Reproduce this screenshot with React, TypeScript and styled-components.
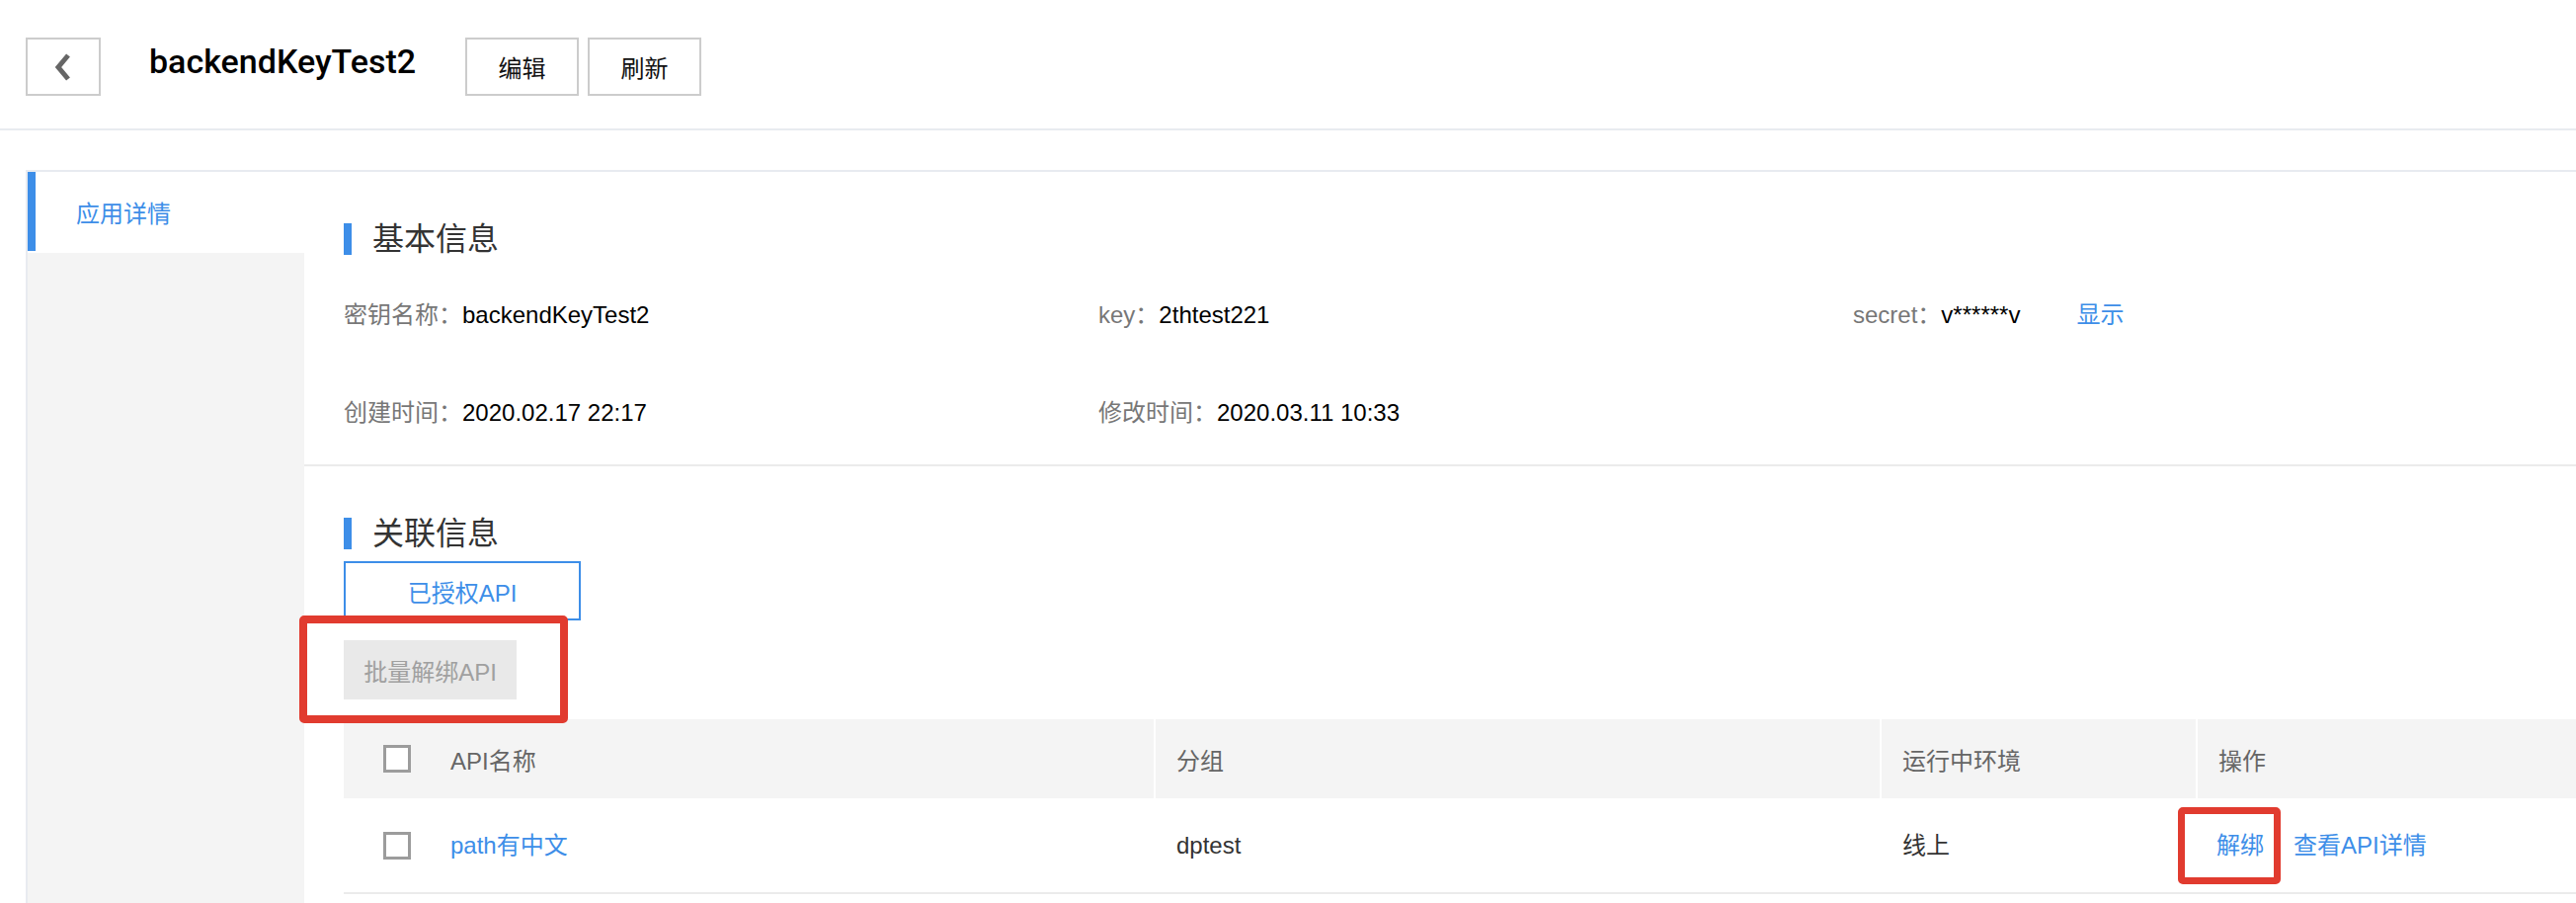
import React from "react";
import styled, { createGlobalStyle } from "styled-components";

const BLUE = "#3d8ee8";
const LINE = "#e8ebf0";
const FONT = `"Liberation Sans", "Noto Sans CJK SC", sans-serif`;

const GlobalStyle = createGlobalStyle`
  html, body {
    margin: 0;
    padding: 0;
    background: #fff;
    overflow: hidden;
  }
  body {
    font-family: ${FONT};
    font-size: 24px;
    color: #333;
  }
  * {
    box-sizing: border-box;
  }
`;

const Page = styled.div`
  display: flex;
  flex-direction: column;
  min-height: 100vh;
  width: 2608px;
  overflow: hidden;
`;

/* top bar */
const Header = styled.header`
  display: flex;
  align-items: flex-start;
  height: 132px;
  padding: 38px 0 0 26px;
  border-bottom: 2px solid ${LINE};
`;

const BackButton = styled.button`
  display: flex;
  align-items: center;
  justify-content: center;
  width: 76px;
  height: 59px;
  padding: 0;
  background: #fff;
  border: 2px solid #ccc;
  cursor: pointer;
`;

const Title = styled.h1`
  margin: 0 0 0 49px;
  font-family: Roboto, "Liberation Sans", sans-serif;
  font-size: 34px;
  font-weight: 500;
  line-height: 49px;
  color: #000;
`;

const HeaderActions = styled.div`
  display: flex;
  gap: 9px;
  margin-left: 50px;
`;

const ToolButton = styled.button`
  width: 115px;
  height: 59px;
  padding: 0;
  background: #fff;
  border: 2px solid #ccc;
  font-family: ${FONT};
  font-size: 24px;
  color: #111;
  cursor: pointer;
`;

/* body */
const Main = styled.div`
  flex: 1;
  display: flex;
  margin: 40px 0 0 26px;
  border-top: 2px solid ${LINE};
  border-left: 2px solid ${LINE};
`;

const Sidebar = styled.nav`
  display: flex;
  flex-direction: column;
  width: 280px;
  flex-shrink: 0;
`;

const MenuItem = styled.div<{ $active?: boolean }>`
  display: flex;
  align-items: center;
  height: 80px;
  padding-left: 41px;
  border-left: 8px solid ${({ $active }) => ($active ? BLUE : "transparent")};
  background: #fff;
  color: ${({ $active }) => ($active ? BLUE : "#333")};
  font-size: 24px;
`;

const SidebarFill = styled.div`
  flex: 1;
  margin-top: 2px;
  background: #f4f4f4;
`;

const Content = styled.main`
  flex: 1;
  min-width: 0;
`;

const Section = styled.section<{ $divided?: boolean }>`
  padding: 52px 0 ${({ $divided }) => ($divided ? "34px" : "0")} 40px;
  border-bottom: ${({ $divided }) => ($divided ? "2px solid #ebebeb" : "none")};
`;

const SectionTitle = styled.h2`
  display: flex;
  align-items: center;
  height: 32px;
  margin: 0;
  font-size: 32px;
  font-weight: 400;
  line-height: 32px;
  color: #333;

  &::before {
    content: "";
    width: 8px;
    height: 32px;
    margin-right: 21px;
    background: ${BLUE};
  }
`;

const InfoGrid = styled.div`
  display: grid;
  grid-template-columns: repeat(3, 764px);
  row-gap: 63px;
  margin-top: 43px;
`;

const InfoItem = styled.div`
  font-size: 24px;
  line-height: 36px;
  white-space: nowrap;
  color: #000;
`;

const Label = styled.span`
  color: #777;
`;

const TextLink = styled.a<{ $gap?: number }>`
  margin-left: ${({ $gap }) => $gap ?? 0}px;
  color: ${BLUE};
  text-decoration: none;
  cursor: pointer;
`;

const Tab = styled.div`
  display: flex;
  align-items: center;
  justify-content: center;
  width: 240px;
  height: 60px;
  margin-top: 12px;
  border: 2px solid ${BLUE};
  color: ${BLUE};
  font-size: 24px;
`;

const Toolbar = styled.div`
  display: flex;
  margin-top: 20px;
`;

const Annotated = styled.span`
  position: relative;
  display: inline-flex;
`;

const Highlight = styled.span<{
  $left: number;
  $top: number;
  $width: number;
  $height: number;
  $stroke: number;
}>`
  position: absolute;
  left: ${({ $left }) => $left}px;
  top: ${({ $top }) => $top}px;
  width: ${({ $width }) => $width}px;
  height: ${({ $height }) => $height}px;
  border: ${({ $stroke }) => $stroke}px solid #e13b2f;
  border-radius: 5px;
  pointer-events: none;
`;

const BatchButton = styled.button`
  width: 175px;
  height: 60px;
  padding: 0;
  border: none;
  background: #e9e9e9;
  color: #a0a0a0;
  font-family: ${FONT};
  font-size: 24px;
`;

const COLUMNS = "822px 735px 320px 420px";

const Table = styled.div`
  margin-top: 20px;
`;

const HeadRow = styled.div`
  display: grid;
  grid-template-columns: ${COLUMNS};
  height: 80px;
  background: #f4f4f4;
`;

const HeadCell = styled.div<{ $first?: boolean }>`
  display: flex;
  align-items: center;
  gap: 40px;
  padding-left: ${({ $first }) => ($first ? 40 : 21)}px;
  border-right: 2px solid #fff;
  color: #666;
  font-size: 24px;
`;

const BodyRow = styled.div`
  display: grid;
  grid-template-columns: ${COLUMNS};
  height: 97px;
  border-bottom: 2px solid #ebebeb;
`;

const Cell = styled.div<{ $pad?: number }>`
  display: flex;
  align-items: center;
  gap: 40px;
  padding-left: ${({ $pad }) => $pad ?? 21}px;
  font-size: 24px;
  line-height: 36px;
  color: #333;
  white-space: nowrap;
`;

const Checkbox = styled.span`
  display: inline-block;
  width: 28px;
  height: 28px;
  flex-shrink: 0;
  border: 3px solid #9c9c9c;
  background: #fff;
`;

const ChevronLeft = () => (
  <svg width="22" height="30" viewBox="0 0 22 30">
    <polyline
      points="16,3 6,15 16,27"
      fill="none"
      stroke="#666"
      strokeWidth="5"
      strokeLinejoin="miter"
    />
  </svg>
);

export default function App() {
  return (
    <>
      <GlobalStyle />
      <Page>
        <Header>
          <BackButton aria-label="返回">
            <ChevronLeft />
          </BackButton>
          <Title>backendKeyTest2</Title>
          <HeaderActions>
            <ToolButton>编辑</ToolButton>
            <ToolButton>刷新</ToolButton>
          </HeaderActions>
        </Header>

        <Main>
          <Sidebar>
            <MenuItem $active>应用详情</MenuItem>
            <SidebarFill />
          </Sidebar>

          <Content>
            <Section $divided>
              <SectionTitle>基本信息</SectionTitle>
              <InfoGrid>
                <InfoItem>
                  <Label>密钥名称：</Label>backendKeyTest2
                </InfoItem>
                <InfoItem>
                  <Label>key：</Label>2thtest221
                </InfoItem>
                <InfoItem>
                  <Label>secret：</Label>v******v
                  <TextLink $gap={57}>显示</TextLink>
                </InfoItem>
                <InfoItem>
                  <Label>创建时间：</Label>2020.02.17 22:17
                </InfoItem>
                <InfoItem>
                  <Label>修改时间：</Label>2020.03.11 10:33
                </InfoItem>
              </InfoGrid>
            </Section>

            <Section>
              <SectionTitle>关联信息</SectionTitle>
              <Tab>已授权API</Tab>
              <Toolbar>
                <Annotated>
                  <BatchButton disabled>批量解绑API</BatchButton>
                  <Highlight $left={-45} $top={-25} $width={272} $height={109} $stroke={8} />
                </Annotated>
              </Toolbar>

              <Table>
                <HeadRow>
                  <HeadCell $first>
                    <Checkbox />
                    API名称
                  </HeadCell>
                  <HeadCell>分组</HeadCell>
                  <HeadCell>运行中环境</HeadCell>
                  <HeadCell>操作</HeadCell>
                </HeadRow>
                <BodyRow>
                  <Cell $pad={40}>
                    <Checkbox />
                    <TextLink>path有中文</TextLink>
                  </Cell>
                  <Cell>dptest</Cell>
                  <Cell>线上</Cell>
                  <Cell $pad={19}>
                    <Annotated>
                      <TextLink>解绑</TextLink>
                      <Highlight $left={-39} $top={-21} $width={104} $height={78} $stroke={7} />
                    </Annotated>
                    <TextLink $gap={-10}>查看API详情</TextLink>
                  </Cell>
                </BodyRow>
              </Table>
            </Section>
          </Content>
        </Main>
      </Page>
    </>
  );
}
